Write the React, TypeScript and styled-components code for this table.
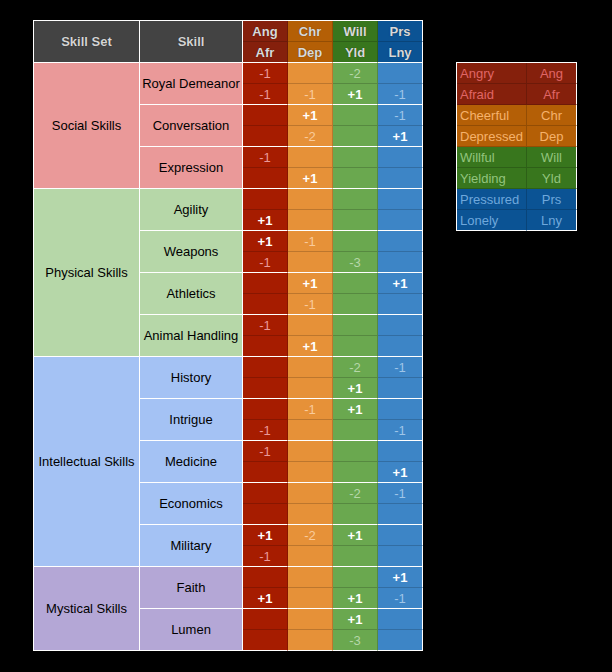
import React from 'react';
import styled, { createGlobalStyle, css } from 'styled-components';

const Global = createGlobalStyle`
  html, body { margin: 0; padding: 0; background: #000; }
  body { font-family: "Liberation Sans", Arial, sans-serif; font-size: 13px; }
`;

type Stat = 'ang' | 'chr' | 'will' | 'prs';

const STAT_ORDER: Stat[] = ['ang', 'chr', 'will', 'prs'];

const palette: Record<Stat, { head: string; body: string; soft: string; legendText: string }> = {
  ang: { head: '#85200c', body: '#a61c00', soft: '#ea9999', legendText: '#e06666' },
  chr: { head: '#b45f06', body: '#e69138', soft: '#f9cb9c', legendText: '#f6b26b' },
  will: { head: '#38761d', body: '#6aa84f', soft: '#b6d7a8', legendText: '#93c47d' },
  prs: { head: '#0b5394', body: '#3d85c6', soft: '#9fc5e8', legendText: '#6fa8dc' },
};

const GRID_DARK = 'rgba(0, 0, 0, 0.18)';

const Page = styled.div`
  display: flex;
  align-items: flex-start;
  gap: 33px;
  padding: 20px 0 0 33px;
  min-height: 100vh;
  box-sizing: border-box;
  background: #000;
`;

const Sheet = styled.div`
  display: grid;
  grid-template-columns: 106px 103px 45px 45px 45px 45px;
  grid-auto-rows: 21px;
  border-top: 1px solid #fff;
  border-left: 1px solid #fff;
  width: max-content;
`;

const cellBase = css`
  box-sizing: border-box;
  display: flex;
  align-items: center;
  justify-content: center;
  white-space: nowrap;
  overflow: hidden;
  line-height: 1;
`;

const HeadCell = styled.div<{ $col: number }>`
  ${cellBase};
  grid-column: ${(p) => p.$col};
  grid-row: span 2;
  background: #434343;
  color: #d4d4d4;
  font-weight: bold;
  text-shadow: 0 0 1px rgba(0, 0, 0, 0.6);
  border-right: 1px solid #fff;
  border-bottom: 1px solid #fff;
`;

const StatHead = styled.div<{ $stat: Stat; $lower: boolean }>`
  ${cellBase};
  background: ${(p) => palette[p.$stat].head};
  color: #d9d9d9;
  font-weight: bold;
  text-shadow: 0 0 1px rgba(0, 0, 0, 0.5);
  border-right: 1px solid ${(p) => (p.$stat === 'prs' ? '#fff' : GRID_DARK)};
  border-bottom: 1px solid ${(p) => (p.$lower ? '#fff' : GRID_DARK)};
`;

const GroupCell = styled.div<{ $span: number; $bg: string }>`
  ${cellBase};
  grid-column: 1;
  grid-row: span ${(p) => p.$span};
  background: ${(p) => p.$bg};
  color: #000;
  border-right: 1px solid #fff;
  border-bottom: 1px solid #fff;
`;

const SkillCell = styled.div<{ $bg: string }>`
  ${cellBase};
  grid-column: 2;
  grid-row: span 2;
  background: ${(p) => p.$bg};
  color: #000;
  border-right: 1px solid #fff;
  border-bottom: 1px solid #fff;
`;

const StatCell = styled.div<{ $stat: Stat; $lower: boolean; $plus: boolean }>`
  ${cellBase};
  background: ${(p) => palette[p.$stat].body};
  color: ${(p) => (p.$plus ? '#fff' : palette[p.$stat].soft)};
  font-weight: ${(p) => (p.$plus ? 'bold' : 'normal')};
  border-right: 1px solid ${(p) => (p.$stat === 'prs' ? '#fff' : GRID_DARK)};
  border-bottom: 1px solid ${(p) => (p.$lower ? '#fff' : GRID_DARK)};
`;

const Legend = styled.div`
  display: grid;
  grid-template-columns: 70px 50px;
  grid-auto-rows: 21px;
  margin-top: 42px;
  border-top: 1px solid #fff;
  border-left: 1px solid #fff;
  width: max-content;
`;

const LegendCell = styled.div<{ $stat: Stat; $abbr: boolean; $last: boolean }>`
  box-sizing: border-box;
  display: flex;
  align-items: center;
  justify-content: ${(p) => (p.$abbr ? 'center' : 'flex-start')};
  padding-left: ${(p) => (p.$abbr ? '0' : '3px')};
  white-space: nowrap;
  overflow: hidden;
  line-height: 1;
  background: ${(p) => palette[p.$stat].head};
  color: ${(p) => palette[p.$stat].legendText};
  border-right: 1px solid ${(p) => (p.$abbr ? '#fff' : GRID_DARK)};
  border-bottom: 1px solid ${(p) => (p.$last ? '#fff' : GRID_DARK)};
`;

type SkillRow = { name: string; top: string[]; bottom: string[] };
type Group = { name: string; color: string; skills: SkillRow[] };

const groups: Group[] = [
  {
    name: 'Social Skills',
    color: '#ea9999',
    skills: [
      { name: 'Royal Demeanor', top: ['-1', '', '-2', ''], bottom: ['-1', '-1', '+1', '-1'] },
      { name: 'Conversation', top: ['', '+1', '', '-1'], bottom: ['', '-2', '', '+1'] },
      { name: 'Expression', top: ['-1', '', '', ''], bottom: ['', '+1', '', ''] },
    ],
  },
  {
    name: 'Physical Skills',
    color: '#b6d7a8',
    skills: [
      { name: 'Agility', top: ['', '', '', ''], bottom: ['+1', '', '', ''] },
      { name: 'Weapons', top: ['+1', '-1', '', ''], bottom: ['-1', '', '-3', ''] },
      { name: 'Athletics', top: ['', '+1', '', '+1'], bottom: ['', '-1', '', ''] },
      { name: 'Animal Handling', top: ['-1', '', '', ''], bottom: ['', '+1', '', ''] },
    ],
  },
  {
    name: 'Intellectual Skills',
    color: '#a4c2f4',
    skills: [
      { name: 'History', top: ['', '', '-2', '-1'], bottom: ['', '', '+1', ''] },
      { name: 'Intrigue', top: ['', '-1', '+1', ''], bottom: ['-1', '', '', '-1'] },
      { name: 'Medicine', top: ['-1', '', '', ''], bottom: ['', '', '', '+1'] },
      { name: 'Economics', top: ['', '', '-2', '-1'], bottom: ['', '', '', ''] },
      { name: 'Military', top: ['+1', '-2', '+1', ''], bottom: ['-1', '', '', ''] },
    ],
  },
  {
    name: 'Mystical Skills',
    color: '#b4a7d6',
    skills: [
      { name: 'Faith', top: ['', '', '', '+1'], bottom: ['+1', '', '+1', '-1'] },
      { name: 'Lumen', top: ['', '', '+1', ''], bottom: ['', '', '-3', ''] },
    ],
  },
];

const headTop = ['Ang', 'Chr', 'Will', 'Prs'];
const headBottom = ['Afr', 'Dep', 'Yld', 'Lny'];

const legend: { full: string; abbr: string; stat: Stat }[] = [
  { full: 'Angry', abbr: 'Ang', stat: 'ang' },
  { full: 'Afraid', abbr: 'Afr', stat: 'ang' },
  { full: 'Cheerful', abbr: 'Chr', stat: 'chr' },
  { full: 'Depressed', abbr: 'Dep', stat: 'chr' },
  { full: 'Willful', abbr: 'Will', stat: 'will' },
  { full: 'Yielding', abbr: 'Yld', stat: 'will' },
  { full: 'Pressured', abbr: 'Prs', stat: 'prs' },
  { full: 'Lonely', abbr: 'Lny', stat: 'prs' },
];

const StatRow: React.FC<{ values: string[]; lower: boolean }> = ({ values, lower }) => (
  <>
    {values.map((v, i) => (
      <StatCell key={i} $stat={STAT_ORDER[i]} $lower={lower} $plus={v.startsWith('+')}>
        {v}
      </StatCell>
    ))}
  </>
);

export default function App() {
  return (
    <>
      <Global />
      <Page>
        <Sheet>
          <HeadCell $col={1}>Skill Set</HeadCell>
          <HeadCell $col={2}>Skill</HeadCell>
          {headTop.map((h, i) => (
            <StatHead key={h} $stat={STAT_ORDER[i]} $lower={false}>
              {h}
            </StatHead>
          ))}
          {headBottom.map((h, i) => (
            <StatHead key={h} $stat={STAT_ORDER[i]} $lower={true}>
              {h}
            </StatHead>
          ))}
          {groups.map((g) => (
            <React.Fragment key={g.name}>
              <GroupCell $span={g.skills.length * 2} $bg={g.color}>
                {g.name}
              </GroupCell>
              {g.skills.map((s) => (
                <React.Fragment key={s.name}>
                  <SkillCell $bg={g.color}>{s.name}</SkillCell>
                  <StatRow values={s.top} lower={false} />
                  <StatRow values={s.bottom} lower={true} />
                </React.Fragment>
              ))}
            </React.Fragment>
          ))}
        </Sheet>
        <Legend>
          {legend.map((l, i) => (
            <React.Fragment key={l.full}>
              <LegendCell $stat={l.stat} $abbr={false} $last={i === legend.length - 1}>
                {l.full}
              </LegendCell>
              <LegendCell $stat={l.stat} $abbr={true} $last={i === legend.length - 1}>
                {l.abbr}
              </LegendCell>
            </React.Fragment>
          ))}
        </Legend>
      </Page>
    </>
  );
}
